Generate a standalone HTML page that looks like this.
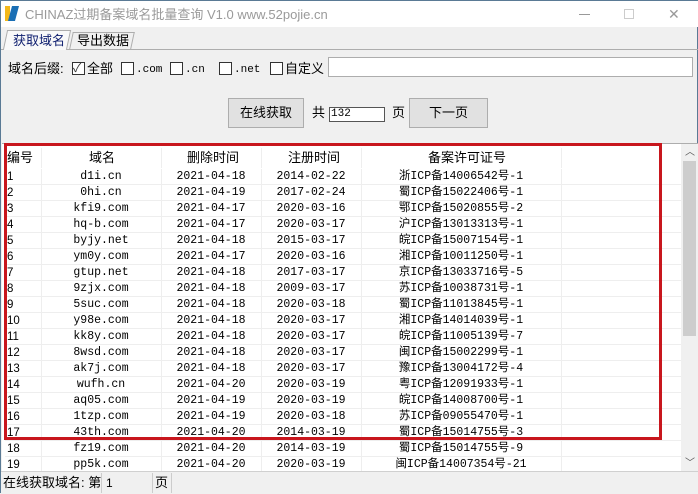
<!DOCTYPE html>
<html><head><meta charset="utf-8"><style>
*{margin:0;padding:0;box-sizing:border-box}
body{width:698px;height:493px;background:#f0f0f0;font-family:"Liberation Sans","Noto Sans CJK SC",sans-serif;font-size:12px;color:#000;position:relative;overflow:hidden;border:1px solid #5a7a95}
.a{position:absolute;white-space:nowrap;line-height:16px}
.mono{font-family:"Liberation Mono","Noto Sans CJK SC",monospace}
.cb{position:absolute;width:13px;height:13px;border:1px solid #333;background:#fff}
.btn{position:absolute;background:#e1e1e1;border:1px solid #adadad;text-align:center;font-size:13px}
.row{position:absolute;left:4px;width:676px;height:16px;border-bottom:1px solid #eee;font-size:11.5px;line-height:16px}
.row span{position:absolute;top:0}
</style></head><body>
<div class="a" style="left:0;top:0;width:698px;height:26px;background:#fff"></div>
<div class="a" style="left:4px;top:5px;width:5px;height:15px;background:#f3b81a"></div>
<div class="a" style="left:9px;top:5px;width:7px;height:15px;background:#1a6fb5;transform:skewX(-15deg)"></div>
<div class="a" style="left:24px;top:6px;font-size:13px;color:#9a9a9a">CHINAZ过期备案域名批量查询 V1.0 www.52pojie.cn</div>
<div class="a" style="left:578px;top:13px;width:11px;height:1px;background:#999"></div>
<div class="a" style="left:623px;top:8px;width:10px;height:10px;border:1px solid #ccc"></div>
<div class="a" style="left:667px;top:5px;font-size:14px;color:#999">✕</div>
<!-- tabs -->
<div class="a" style="left:0;top:48px;width:698px;height:1px;background:#adadad"></div>
<div class="a" style="left:4px;top:29px;width:64px;height:20px;background:#f9f9f9;border:1px solid #adadad;border-bottom:none;transform:skewX(-12deg)"></div>
<div class="a" style="left:12px;top:32px;font-size:13px;color:#102070">获取域名</div>
<div class="a" style="left:70px;top:31px;width:62px;height:17px;border:1px solid #adadad;border-bottom:none;transform:skewX(-12deg);background:#f0f0f0"></div>
<div class="a" style="left:76px;top:32px;font-size:13px">导出数据</div>
<!-- checkbox row -->
<div class="a" style="left:7px;top:60px;font-size:13px">域名后缀:</div>
<div class="cb" style="left:71px;top:61px"></div><div class="a" style="left:72px;top:59px;font-size:12px;color:#333">✓</div>
<div class="a" style="left:86px;top:60px;font-size:13px">全部</div>
<div class="cb" style="left:120px;top:61px"></div><div class="a mono" style="left:135px;top:61px;font-size:11px">.com</div>
<div class="cb" style="left:169px;top:61px"></div><div class="a mono" style="left:184px;top:61px;font-size:11px">.cn</div>
<div class="cb" style="left:218px;top:61px"></div><div class="a mono" style="left:233px;top:61px;font-size:11px">.net</div>
<div class="cb" style="left:269px;top:61px"></div><div class="a" style="left:284px;top:60px;font-size:13px">自定义</div>
<div class="a" style="left:327px;top:56px;width:365px;height:20px;background:#fff;border:1px solid #adadad"></div>
<!-- buttons -->
<div class="btn" style="left:227px;top:97px;width:76px;height:30px;line-height:28px">在线获取</div>
<div class="a" style="left:311px;top:104px;font-size:13px">共</div>
<div class="a mono" style="left:328px;top:106px;width:56px;height:15px;background:#fff;border:1px solid #555;font-size:11px;line-height:13px;padding-left:1px">132</div>
<div class="a" style="left:391px;top:104px;font-size:13px">页</div>
<div class="btn" style="left:408px;top:97px;width:79px;height:30px;line-height:28px">下一页</div>
<!-- table -->
<div class="a" style="left:1px;top:142px;width:696px;height:328px;background:#fff;border-top:1px solid #adadad"></div>
<div class="a" style="left:680px;top:143px;width:17px;height:327px;background:#f0f0f0"></div>
<div class="a" style="left:682px;top:160px;width:13px;height:175px;background:#cdcdcd"></div>
<div class="a" style="left:684px;top:144px;font-size:10px;color:#555">︿</div>
<div class="a" style="left:684px;top:455px;font-size:10px;color:#555">﹀</div>
<div class="row" style="top:147px;height:21px;line-height:20px;font-size:13px;border-bottom:none">
<span style="left:2px">编号</span><span style="left:84px">域名</span><span style="left:182px">删除时间</span><span style="left:283px">注册时间</span><span style="left:423px">备案许可证号</span>
<span style="left:36px;width:1px;height:20px;background:#eee"></span><span style="left:156px;width:1px;height:20px;background:#eee"></span><span style="left:256px;width:1px;height:20px;background:#eee"></span><span style="left:356px;width:1px;height:20px;background:#eee"></span><span style="left:556px;width:1px;height:20px;background:#eee"></span>
</div>
<div id="rows"></div>
<script>
var d=[["d1i.cn","2021-04-18","2014-02-22","浙ICP备14006542号-1"],["0hi.cn","2021-04-19","2017-02-24","蜀ICP备15022406号-1"],["kfi9.com","2021-04-17","2020-03-16","鄂ICP备15020855号-2"],["hq-b.com","2021-04-17","2020-03-17","沪ICP备13013313号-1"],["byjy.net","2021-04-18","2015-03-17","皖ICP备15007154号-1"],["ym0y.com","2021-04-17","2020-03-16","湘ICP备10011250号-1"],["gtup.net","2021-04-18","2017-03-17","京ICP备13033716号-5"],["9zjx.com","2021-04-18","2009-03-17","苏ICP备10038731号-1"],["5suc.com","2021-04-18","2020-03-18","蜀ICP备11013845号-1"],["y98e.com","2021-04-18","2020-03-17","湘ICP备14014039号-1"],["kk8y.com","2021-04-18","2020-03-17","皖ICP备11005139号-7"],["8wsd.com","2021-04-18","2020-03-17","闽ICP备15002299号-1"],["ak7j.com","2021-04-18","2020-03-17","豫ICP备13004172号-4"],["wufh.cn","2021-04-20","2020-03-19","粤ICP备12091933号-1"],["aq05.com","2021-04-19","2020-03-19","皖ICP备14008700号-1"],["1tzp.com","2021-04-19","2020-03-18","苏ICP备09055470号-1"],["43th.com","2021-04-20","2014-03-19","蜀ICP备15014755号-3"],["fz19.com","2021-04-20","2014-03-19","蜀ICP备15014755号-9"],["pp5k.com","2021-04-20","2020-03-19","闽ICP备14007354号-21"]];
var h="";d.forEach(function(r,i){var t=168+16*i;h+='<div class="row mono" style="top:'+t+'px"><span style="left:2px;font-family:Liberation Sans,sans-serif">'+(i+1)+'</span><span style="left:36px;width:120px;text-align:center">'+r[0]+'</span><span style="left:156px;width:100px;text-align:center">'+r[1]+'</span><span style="left:256px;width:100px;text-align:center">'+r[2]+'</span><span style="left:356px;width:200px;text-align:center">'+r[3]+'</span><span style="left:36px;width:1px;height:16px;background:#eee"></span><span style="left:156px;width:1px;height:16px;background:#eee"></span><span style="left:256px;width:1px;height:16px;background:#eee"></span><span style="left:356px;width:1px;height:16px;background:#eee"></span><span style="left:556px;width:1px;height:16px;background:#eee"></span></div>';});
document.getElementById("rows").innerHTML=h;
</script>
<div class="a" style="left:3px;top:142px;width:658px;height:297px;border:3px solid #c8161d"></div>
<!-- status -->
<div class="a" style="left:0;top:470px;width:698px;height:23px;background:#f0f0f0;border-top:1px solid #d0d0d0"></div>
<div class="a" style="left:2px;top:474px;font-size:13px">在线获取域名: 第</div>
<div class="a" style="left:100px;top:472px;width:1px;height:20px;background:#ccc"></div>
<div class="a" style="left:105px;top:474px;font-size:12px">1</div>
<div class="a" style="left:151px;top:472px;width:1px;height:20px;background:#ccc"></div>
<div class="a" style="left:154px;top:474px;font-size:13px">页</div>
<div class="a" style="left:170px;top:472px;width:1px;height:20px;background:#ccc"></div>
</body></html>
